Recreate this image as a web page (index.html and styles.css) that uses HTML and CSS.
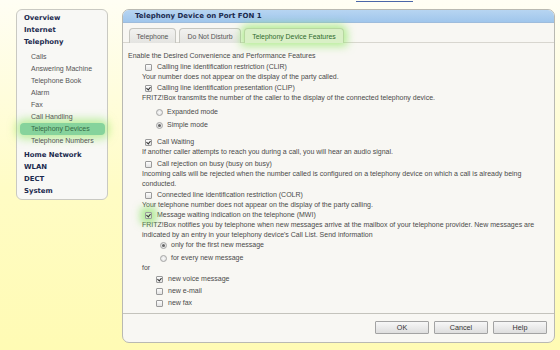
FILE: index.html
```html
<!DOCTYPE html>
<html>
	<head>
		<meta charset="UTF-8">
		<title>Telephony Device Features</title>
		<link rel="stylesheet" href="styles.css">
	</head>
	<body>
		<div class="topline"><span class="cutlink"></span></div>
		<div class="page">
			<div class="menu">
				<a class="main">Overview</a>
				<a class="main">Internet</a>
				<a class="main">Telephony</a>
				<div class="sub">
					<a>Calls</a>
					<a>Answering Machine</a>
					<a>Telephone Book</a>
					<a>Alarm</a>
					<a>Fax</a>
					<a>Call Handling</a>
					<a class="current">Telephony Devices</a>
					<a>Telephone Numbers</a>
				</div>
				<a class="main">Home Network</a>
				<a class="main">WLAN</a>
				<a class="main">DECT</a>
				<a class="main">System</a>
			</div>

			<div class="panel">
				<div class="head">Telephony Device on Port FON 1</div>
				<div class="tabs">
					<span class="tab t1">Telephone</span>
					<span class="tab t2">Do Not Disturb</span>
					<span class="tab t3 active">Telephony Device Features</span>
				</div>
				<div class="content">
					<div class="intro">Enable the Desired Convenience and Performance Features</div>

					<div class="opt"><span class="cb"></span>Calling line identification restriction (CLIR)</div>
					<div class="desc">Your number does not appear on the display of the party called.</div>

					<div class="opt"><span class="cb on"></span>Calling line identification presentation (CLIP)</div>
					<div class="desc">FRITZ!Box transmits the number of the caller to the display of the connected telephony device.</div>
					<div class="radio r1"><span class="rb"></span>Expanded mode</div>
					<div class="radio r2"><span class="rb on"></span>Simple mode</div>

					<div class="opt cw"><span class="cb on"></span>Call Waiting</div>
					<div class="desc">If another caller attempts to reach you during a call, you will hear an audio signal.</div>

					<div class="opt gap2"><span class="cb"></span>Call rejection on busy (busy on busy)</div>
					<div class="desc">Incoming calls will be rejected when the number called is configured on a telephony device on which a call is already being<br>conducted.</div>

					<div class="opt"><span class="cb"></span>Connected line identification restriction (COLR)</div>
					<div class="desc">Your telephone number does not appear on the display of the party calling.</div>

					<div class="opt nogap"><span class="cb on glow"></span>Message waiting indication on the telephone (MWI)</div>
					<div class="desc">FRITZ!Box notifies you by telephone when new messages arrive at the mailbox of your telephone provider. New messages are<br>indicated by an entry in your telephony device's Call List. Send information</div>
					<div class="radio deep first"><span class="rb on"></span>only for the first new message</div>
					<div class="radio deep r2"><span class="rb"></span>for every new message</div>
					<div class="desc">for</div>
					<div class="opt deep gap1"><span class="cb on"></span>new voice message</div>
					<div class="opt deep gap2"><span class="cb"></span>new e-mail</div>
					<div class="opt deep gap2"><span class="cb"></span>new fax</div>
				</div>
				<div class="buttons">
					<button>OK</button>
					<button>Cancel</button>
					<button>Help</button>
				</div>
			</div>
		</div>
	</body>
</html>
```

FILE: styles.css
```css
*{
	margin:0px;
	padding:0px;
	box-sizing:border-box;
}
html,body{
	height:100%;
}
body{
	background:linear-gradient(#fffef4,#fffcc4 55%,#fffbb4);
	font-family:"Liberation Sans",Arial,sans-serif;
	font-size:7px;
	color:#4a4a4a;
}
.topline{
	height:3px;
	padding-left:356px;
}
.cutlink{
	display:block;
	width:57px;
	height:2px;
	border-bottom:1px solid #4a66a8;
}
.page{
	display:flex;
	gap:14px;
	padding:6px 0 0 16px;
}

/* left menu */
.menu{
	width:92px;
	height:191px;
	background:#f8f8f5;
	border:1px solid #c9c9c2;
	border-radius:6px;
	padding:2px 2px 1px 3px;
	display:flex;
	flex-direction:column;
}
.menu a{
	display:block;
	line-height:12px;
	height:12px;
	white-space:nowrap;
}
.menu .main{
	font-family:"DejaVu Sans",Verdana,sans-serif;
	font-weight:bold;
	font-size:6.9px;
	color:#1b2a4e;
	padding-left:4px;
}
.sub{
	margin:3px 0 2px;
}
.sub a{
	padding-left:11px;
	color:#555;
	font-size:7px;
}
.sub a.current{
	background:#86d39c;
	border-radius:4px;
	color:#356a45;
	box-shadow:0 0 8px 4px rgba(140,230,90,.55);
}

/* main panel */
.panel{
	width:433px;
	height:334px;
	background:#f8f7f3;
	border:1px solid #b9b9b2;
	border-radius:7px;
	display:flex;
	flex-direction:column;
	overflow:hidden;
}
.head{
	height:13px;
	line-height:13px;
	background:linear-gradient(#b7d5f2,#a0c6ec);
	border-bottom:1px solid #9ebcdc;
	padding-left:12px;
	font-family:"DejaVu Sans",Verdana,sans-serif;
	font-weight:bold;
	font-size:7px;
	color:#1b2a4e;
}
.tabs{
	display:flex;
	gap:3px;
	padding:5px 0 0 6px;
	border-bottom:1px solid #d8d6cf;
	height:20px;
}
.tab{
	height:15px;
	line-height:15px;
	text-align:center;
	background:linear-gradient(#f2f2f0,#e4e4e1);
	border:1px solid #c6c6c0;
	border-bottom:none;
	border-radius:4px 4px 0 0;
	color:#555;
	font-size:6.9px;
}
.t1{ width:47px; }
.t2{ width:62px; }
.t3{ width:100px; }
.tab.active{
	background:#d9f0c6;
	border-color:#b7d8a0;
	color:#2f6a2c;
	box-shadow:0 0 9px 3px rgba(130,230,80,.6);
}

.content{
	flex:1;
	padding:8px 0 0 5px;
}
.intro,.desc,.opt,.radio{
	line-height:10px;
	white-space:nowrap;
}
.desc{
	padding-left:14px;
}
.opt{
	display:flex;
	align-items:center;
	margin-top:1px;
	padding-left:17px;
	height:10px;
}
.opt.nogap{ margin-top:0; }
.opt.cw{ margin-top:7px; }
.opt.gap1{ margin-top:1px; }
.opt.gap2{ margin-top:2px; }
.opt.deep{ padding-left:28px; }
.radio{
	display:flex;
	align-items:center;
	padding-left:28px;
	height:10px;
}
.radio.r1{ margin-top:4px; }
.radio.r2{ margin-top:3px; }
.radio.deep{ padding-left:32px; }
.radio.first{ margin-top:0; }

.cb{
	width:7px;
	height:7px;
	margin-right:5px;
	border:1px solid #9a9a9a;
	border-radius:1px;
	background:linear-gradient(#fdfdfd,#e2e2e2);
	position:relative;
	flex:none;
}
.cb.on::after{
	content:"";
	position:absolute;
	left:1px;
	top:0px;
	width:2px;
	height:3px;
	border:solid #333;
	border-width:0 1.3px 1.3px 0;
	transform:rotate(40deg);
}
.cb.glow{
	box-shadow:0 0 7px 5px rgba(130,225,90,.55);
	background:#cdeec0;
}
.rb{
	width:7px;
	height:7px;
	margin-right:4px;
	border:1px solid #a5a5a5;
	border-radius:50%;
	background:radial-gradient(#fafafa,#dcdcdc);
	position:relative;
	flex:none;
}
.rb.on::after{
	content:"";
	position:absolute;
	left:1px;
	top:1px;
	width:3px;
	height:3px;
	border-radius:50%;
	background:#666;
}

.buttons{
	height:29px;
	border-top:1px solid #c4c3bc;
	display:flex;
	justify-content:flex-end;
	gap:5px;
	padding:7px 7px 0 0;
}
.buttons button{
	width:54px;
	height:13px;
	font-family:"Liberation Sans",Arial,sans-serif;
	font-size:7.2px;
	color:#333;
	background:linear-gradient(#f7f7f7,#dedede);
	border:1px solid #a3a3a3;
	border-radius:1px;
}
```
